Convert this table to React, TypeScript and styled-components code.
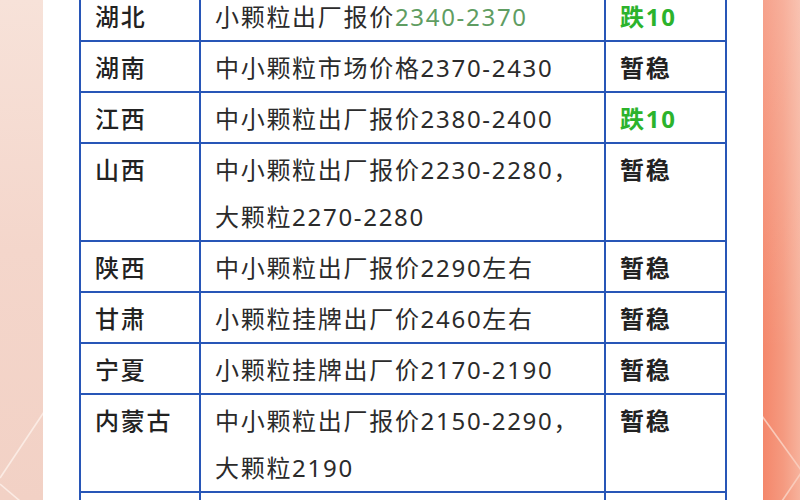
import React from 'react';
import styled, { createGlobalStyle } from 'styled-components';

type Tone = 'plain' | 'green' | 'soft';

type Piece = { text: string; tone?: Tone };

type PriceRow = {
  region: string;
  lines: Array<Array<Piece>>;
  trend: string;
  trendTone?: Tone;
};

const rows: Array<PriceRow> = [
  {
    region: '湖北',
    lines: [[{ text: '小颗粒出厂报价' }, { text: '2340-2370', tone: 'soft' }]],
    trend: '跌10',
    trendTone: 'green',
  },
  { region: '湖南', lines: [[{ text: '中小颗粒市场价格2370-2430' }]], trend: '暂稳' },
  { region: '江西', lines: [[{ text: '中小颗粒出厂报价2380-2400' }]], trend: '跌10', trendTone: 'green' },
  {
    region: '山西',
    lines: [[{ text: '中小颗粒出厂报价2230-2280，' }], [{ text: '大颗粒2270-2280' }]],
    trend: '暂稳',
  },
  { region: '陕西', lines: [[{ text: '中小颗粒出厂报价2290左右' }]], trend: '暂稳' },
  { region: '甘肃', lines: [[{ text: '小颗粒挂牌出厂价2460左右' }]], trend: '暂稳' },
  { region: '宁夏', lines: [[{ text: '小颗粒挂牌出厂价2170-2190' }]], trend: '暂稳' },
  {
    region: '内蒙古',
    lines: [[{ text: '中小颗粒出厂报价2150-2290，' }], [{ text: '大颗粒2190' }]],
    trend: '暂稳',
  },
  { region: '', lines: [[{ text: '' }]], trend: '' },
];

const toneColor = (tone?: Tone) => {
  if (tone === 'green') return '#2cb32c';
  if (tone === 'soft') return '#5f9d62';
  return 'inherit';
};

export default function App() {
  return (
    <>
      <GlobalStyle />
      <Page>
        <LeftEdge>
          <svg width="43" height="500" viewBox="0 0 43 500">
            <polyline points="44,412 0,478" fill="none" stroke="#fbebe4" strokeWidth="1.6" />
            <polyline points="0,484 20,501" fill="none" stroke="#fbebe4" strokeWidth="1.6" />
          </svg>
        </LeftEdge>
        <Panel>
          <Table>
            {rows.map((row, i) => (
              <React.Fragment key={i}>
                <RegionCell>{row.region}</RegionCell>
                <PriceCell>
                  {row.lines.map((line, j) => (
                    <Line key={j}>
                      {line.map((piece, k) => (
                        <Piece key={k} $tone={piece.tone}>
                          {piece.text}
                        </Piece>
                      ))}
                    </Line>
                  ))}
                </PriceCell>
                <TrendCell $tone={row.trendTone}>{row.trend}</TrendCell>
              </React.Fragment>
            ))}
          </Table>
        </Panel>
        <RightEdge>
          <svg width="37" height="500" viewBox="0 0 37 500">
            <polyline points="-1,416 38,470" fill="none" stroke="#f9cbbb" strokeWidth="1.6" />
            <polyline points="38,473 19,501" fill="none" stroke="#f9cbbb" strokeWidth="1.6" />
          </svg>
        </RightEdge>
      </Page>
    </>
  );
}

const GlobalStyle = createGlobalStyle`
  html, body {
    margin: 0;
    padding: 0;
    width: 800px;
    height: 500px;
    overflow: hidden;
  }

  body {
    font-family: "Noto Sans", "Noto Sans CJK SC", sans-serif;
  }
`;

const Page = styled.div`
  display: flex;
  width: 800px;
  height: 500px;
  overflow: hidden;
`;

const LeftEdge = styled.div`
  flex: 0 0 43px;
  background: linear-gradient(180deg, #f7e2d9 0%, #f4d6cb 50%, #f2d1c5 100%);

  svg {
    display: block;
  }
`;

const RightEdge = styled.div`
  flex: 0 0 37px;
  background: linear-gradient(180deg, rgba(255, 255, 255, 0.22) 0%, rgba(255, 255, 255, 0) 70%),
    linear-gradient(90deg, #f4876b 0%, #f59a80 55%, #f7b29c 100%);

  svg {
    display: block;
  }
`;

const Panel = styled.div`
  flex: 1;
  background: #fff;
  padding: 0 36px;
`;

const Table = styled.div`
  display: grid;
  grid-template-columns: 118px 403px 119px;
  gap: 2px;
  padding: 2px;
  margin-top: -11px;
  background: #2856b7;
`;

const Cell = styled.div`
  background: #fff;
  padding: 2px 14px 0;
  min-height: 47px;
  font-size: 24px;
  line-height: 47px;
  letter-spacing: 1.7px;
  color: #2a2a2a;
  white-space: nowrap;
`;

const RegionCell = styled(Cell)`
  font-weight: 500;
  color: #222;
`;

const PriceCell = styled(Cell)`
  color: #2b2b2b;
`;

const Line = styled.div``;

const Piece = styled.span<{ $tone?: Tone }>`
  color: ${(p) => toneColor(p.$tone)};
`;

const TrendCell = styled(Cell)<{ $tone?: Tone }>`
  font-weight: ${(p) => (p.$tone === 'green' ? 700 : 600)};
  color: ${(p) => (p.$tone ? toneColor(p.$tone) : '#222')};
`;
